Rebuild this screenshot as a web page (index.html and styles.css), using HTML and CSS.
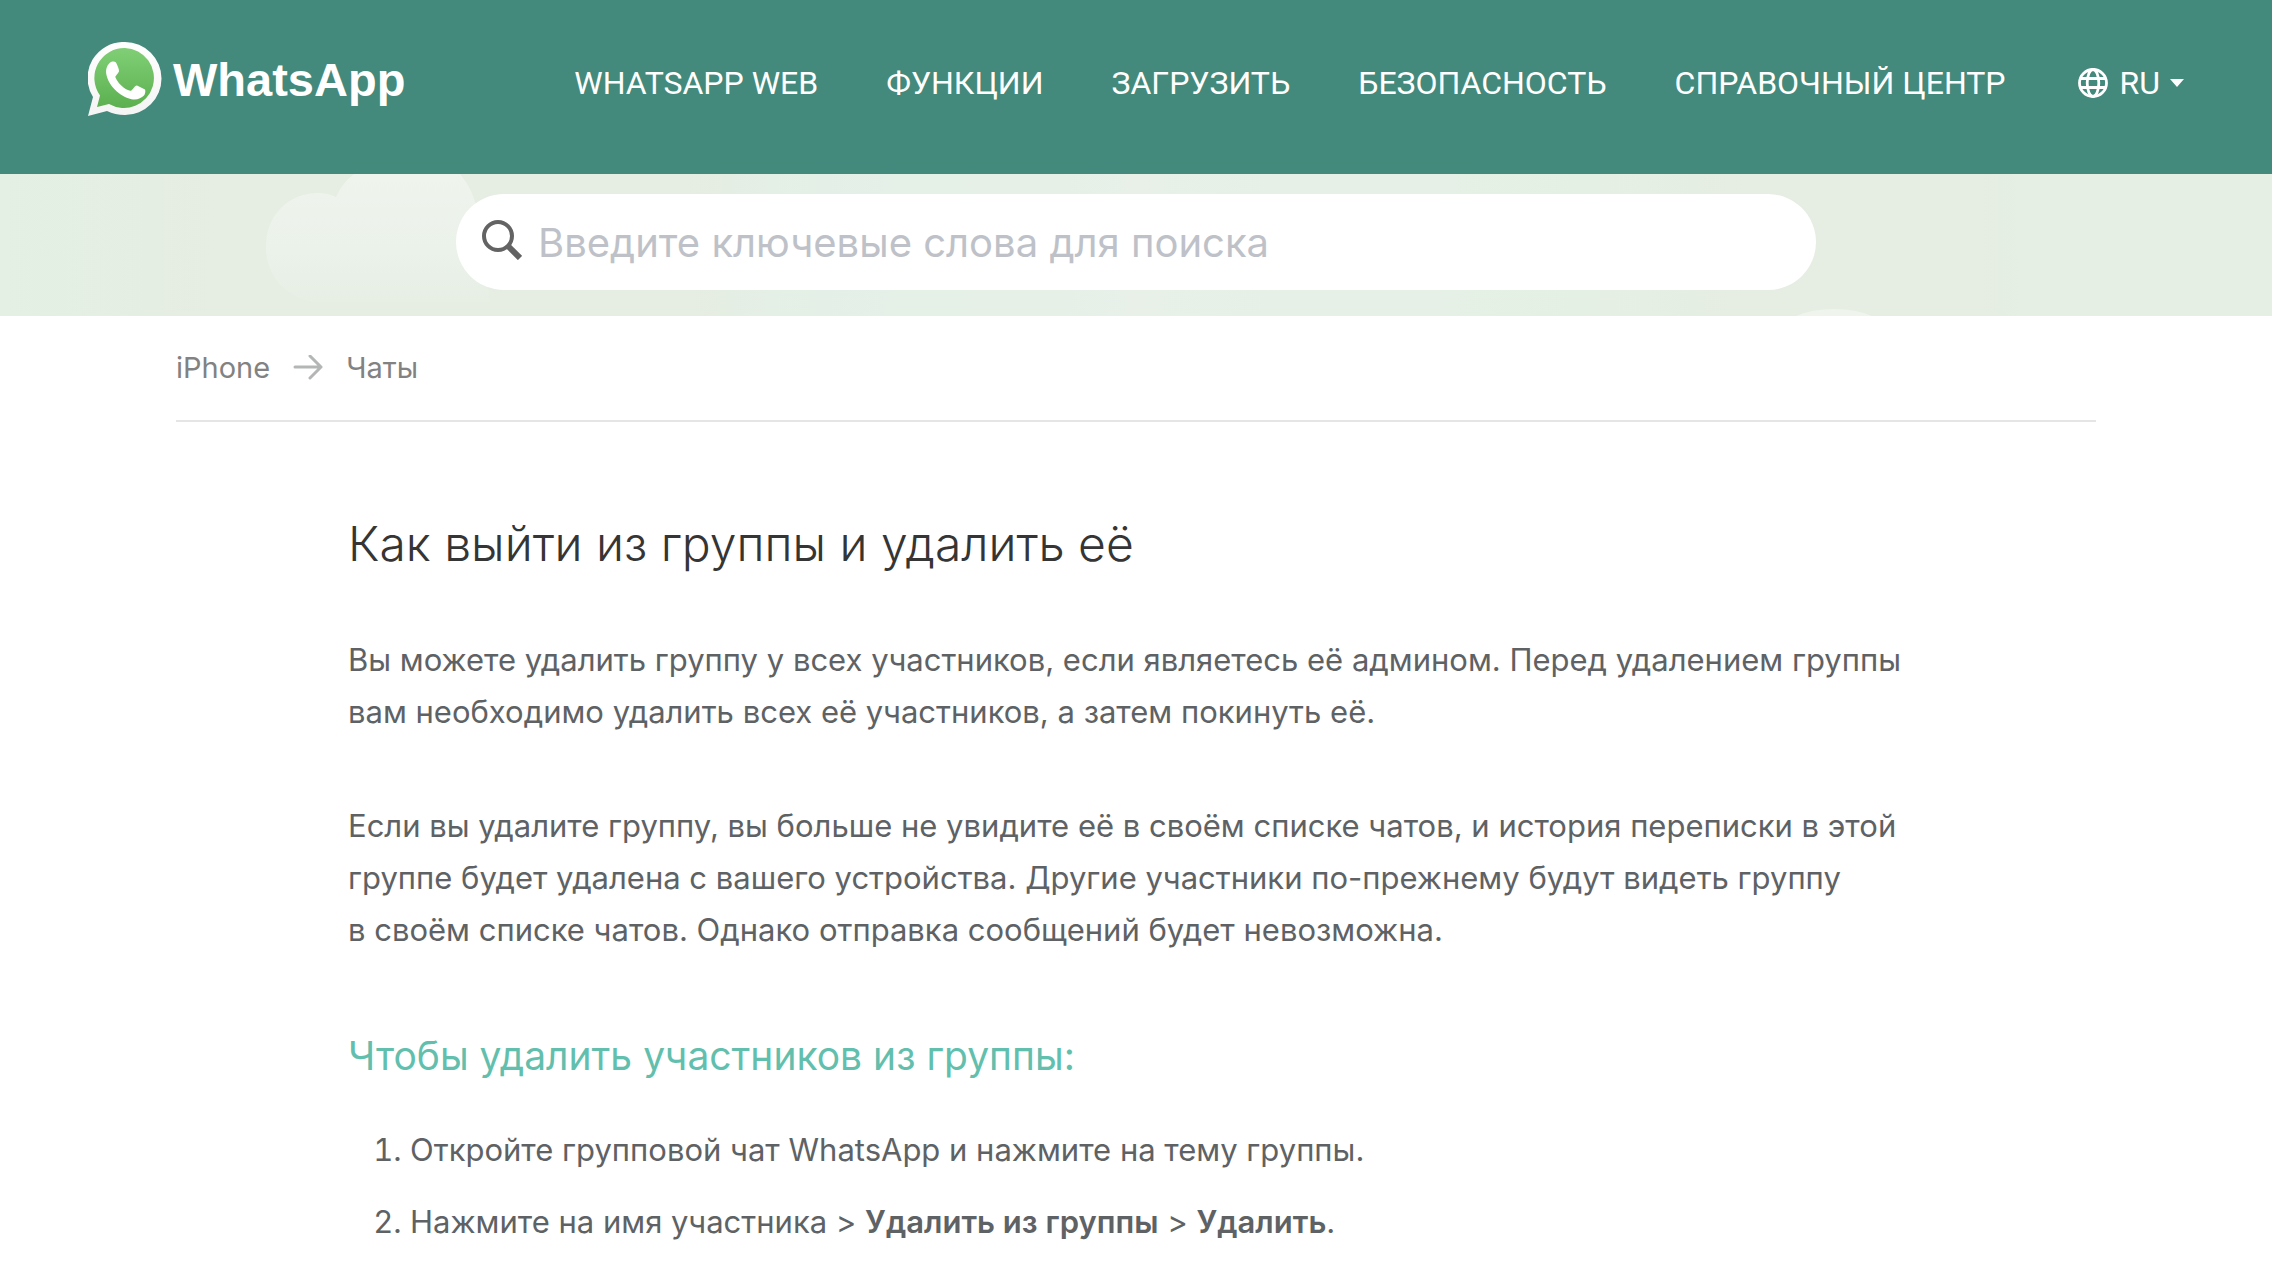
FILE: index.html
```html
<!DOCTYPE html>
<html lang="ru">
<head>
<meta charset="utf-8">
<meta name="viewport" content="width=device-width, initial-scale=1">
<title>Как выйти из группы и удалить её</title>
<link rel="stylesheet" href="styles.css">
</head>
<body>
<header class="header">
  <a class="logo" href="#">
    <svg class="logo-mark" viewBox="0 0 74 74" aria-hidden="true">
      <defs>
        <linearGradient id="green" x1="0" y1="0" x2="0" y2="1"><stop offset="0" stop-color="#80cf76"/><stop offset="1" stop-color="#5cb04f"/></linearGradient>
        <linearGradient id="rim" x1="0" y1="0" x2="0" y2="1"><stop offset="0" stop-color="#fff"/><stop offset="1" stop-color="#f4f4f4"/></linearGradient>
      </defs>
      <path fill="url(#rim)" d="M37 0a36 36 0 0 1 0 73q-10 0-18-4L0 74l5-19A36 36 0 0 1 37 0z"/>
      <path fill="url(#green)" d="M37 6a30 30 0 1 1-16 56L9 65l3-11.500A30 30 0 0 1 37 6z"/>
      <path fill="#fff" d="M23 20c2-.8 4-.6 5 .6 1.400 3 3 6.200 3 8.200 0 2.400-4 5-3.600 6.400 3 6.600 8.600 11.800 14.800 13.600 2 .4 4.400-5.800 6.800-5.400l8 4c.8 1.200.2 4.400-1 6.200-3 3-7 4.600-12.600 3.600C31 54 20 43 18.200 31.400c-.6-5.200 1.600-9.400 4.800-11.400z"/>
    </svg>
    <span class="logo-text">WhatsApp</span>
  </a>
  <nav class="nav">
    <a href="#">WHATSAPP WEB</a>
    <a href="#">ФУНКЦИИ</a>
    <a href="#">ЗАГРУЗИТЬ</a>
    <a href="#">БЕЗОПАСНОСТЬ</a>
    <a href="#">СПРАВОЧНЫЙ ЦЕНТР</a>
    <button class="language" type="button">
      <svg class="globe" viewBox="0 0 30 30" fill="none" stroke="currentColor" stroke-width="2.800" aria-hidden="true"><circle cx="15" cy="15" r="13.500"/><ellipse cx="15" cy="15" rx="5.800" ry="13.500"/><path d="M2.500 10.500h25M2.500 19.500h25"/></svg>
      <span>RU</span>
      <svg class="caret" viewBox="0 0 14 8" aria-hidden="true"><path fill="currentColor" d="M0 0h14L7 8z"/></svg>
    </button>
  </nav>
</header>

<section class="search-band">
  <svg class="scenery" viewBox="0 0 2272 142" preserveAspectRatio="xMidYMin slice" aria-hidden="true">
    <defs>
      <linearGradient id="sky"><stop offset="0" stop-color="#e4f0e4"/><stop offset=".1" stop-color="#e6ede2"/><stop offset=".3" stop-color="#e6ede2"/><stop offset=".36" stop-color="#e4f0e7"/><stop offset=".5" stop-color="#e8f0e8"/><stop offset=".7" stop-color="#e5f0e5"/><stop offset=".77" stop-color="#e6ede2"/><stop offset=".87" stop-color="#e6ede2"/><stop offset=".89" stop-color="#e5efe3"/><stop offset="1" stop-color="#e5efe3"/></linearGradient>
      <linearGradient id="cloud" gradientUnits="userSpaceOnUse" x1="0" y1="0" x2="0" y2="128"><stop offset="0" stop-color="#eff4ed"/><stop offset=".6" stop-color="#ebf2ea"/><stop offset="1" stop-color="#e7eee4"/></linearGradient>
    </defs>
    <path fill="url(#sky)" d="M0 0h2272v142H0z"/>
    <path fill="url(#cloud)" d="M354 0h106q14 16 18 40l12 88H318a54 54 0 0 1-52-56c0-30 22-53 52-53q10 0 18 4 6-14 18-23z"/>
    <path fill="#eff4ed" d="M1796 142q16-7 38-7t38 7z"/>
  </svg>
  <form class="search" role="search">
    <svg class="search-icon" viewBox="0 0 40 40" fill="none" stroke="#636363" aria-hidden="true"><circle cx="16" cy="16" r="14" stroke-width="4"/><path stroke-width="6" d="M26 26l12 12"/></svg>
    <input class="search-input" type="text" aria-label="Поиск" placeholder="Введите ключевые слова для поиска">
  </form>
</section>

<main class="page">
  <nav class="breadcrumbs" aria-label="Навигация">
    <a href="#">iPhone</a>
    <svg class="arrow" viewBox="0 0 30 26" fill="none" stroke="#b4b6b6" stroke-width="3" stroke-linecap="round" stroke-linejoin="round" aria-hidden="true"><path d="M2 12h26M17 1l11 11-11 11"/></svg>
    <a href="#">Чаты</a>
  </nav>
  <article class="article">
    <h1>Как выйти из группы и удалить её</h1>
    <p>Вы можете удалить группу у всех участников, если являетесь её админом. Перед удалением группы<br>вам необходимо удалить всех её участников, а затем покинуть её.</p>
    <p>Если вы удалите группу, вы больше не увидите её в своём списке чатов, и история переписки в этой<br>группе будет удалена с вашего устройства. Другие участники по-прежнему будут видеть группу<br>в своём списке чатов. Однако отправка сообщений будет невозможна.</p>
    <h2>Чтобы удалить участников из группы:</h2>
    <ol>
      <li>Откройте групповой чат WhatsApp и нажмите на тему группы.</li>
      <li>Нажмите на имя участника &gt; <strong>Удалить из группы</strong> &gt; <strong>Удалить</strong>.</li>
    </ol>
  </article>
</main>
</body>
</html>
```
FILE: styles.css
```css
* { box-sizing: border-box; }

body {
  margin: 0;
  background: #fff;
  color: #5e6265;
  font-family: Inter, "Noto Sans", sans-serif;
  font-size: 31px;
  line-height: 52px;
}

a { color: inherit; text-decoration: none; }

.header {
  display: flex;
  justify-content: space-between;
  align-items: flex-start;
  padding: 42px 88px 58px;
  background: #43897c;
  color: #fff;
}

.logo { display: flex; align-items: center; gap: 11px; }
.logo-mark { width: 74px; height: 74px; }
.logo-text {
  font: bold 47px/76px "Liberation Sans", Arial, sans-serif;
  height: 74px;
}

.nav {
  display: flex;
  align-items: center;
  gap: 68px;
  padding-top: 22px;
  font: 32px/38px Roboto, sans-serif;
  white-space: nowrap;
}

.language {
  display: flex;
  align-items: center;
  gap: 10px;
  margin: 0 0 0 4px;
  padding: 0;
  border: 0;
  background: none;
  color: inherit;
  font: inherit;
}
.globe { width: 30px; height: 30px; margin-right: 2px; }
.caret { width: 14px; height: 8px; }

.search-band {
  position: relative;
  padding: 20px 24px 26px;
  background: #e5efe3;
}
.scenery {
  position: absolute;
  inset: 0;
  width: 100%;
  height: 100%;
}
.search {
  position: relative;
  display: flex;
  align-items: center;
  gap: 16px;
  max-width: 1360px;
  margin: 0 auto;
  padding: 0 48px 0 26px;
  border-radius: 48px;
  background: #fff;
}
.search-icon { flex: none; width: 40px; height: 40px; margin-bottom: 4px; }
.search-input {
  flex: 1;
  min-width: 0;
  height: 96px;
  padding: 0;
  border: 0;
  outline: 0;
  background: none;
  color: #5e6265;
  font: 40px/52px Inter, "Noto Sans", sans-serif;
}
.search-input::placeholder { color: #bec2c8; opacity: 1; }

.page { max-width: 1920px; margin: 0 auto; }

.breadcrumbs {
  display: flex;
  align-items: center;
  gap: 23px;
  padding: 26px 0;
  border-bottom: 2px solid #e5e5e5;
  color: #828282;
  font-size: 29px;
}
.arrow { width: 30px; height: 26px; }

.article { padding: 90px 172px 20px; }

h1 {
  margin: 0 0 58px;
  color: #353535;
  font-size: 48px;
  font-weight: 300;
  line-height: 64px;
}
p { margin: 0 0 62px; }
h2 {
  margin: 74px 0 42px;
  color: #62bfad;
  font-size: 39px;
  font-weight: 400;
  line-height: 52px;
}
ol { margin: 0; padding-left: 62px; }
li { margin-bottom: 20px; }
strong { font-weight: 600; }
```
